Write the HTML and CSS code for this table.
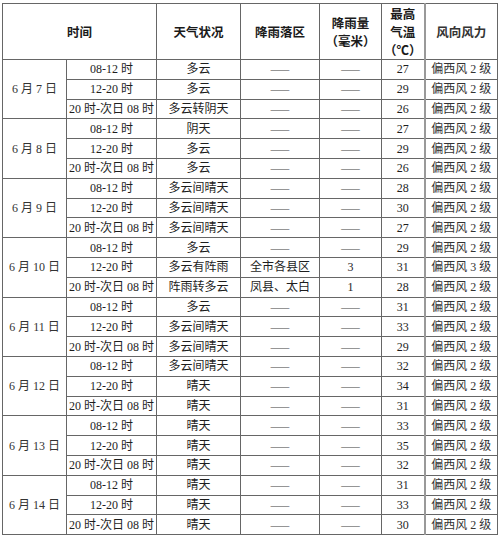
FILE: index.html
```html
<!DOCTYPE html>
<html lang="zh-CN">
<head>
<meta charset="utf-8">
<title>天气预报</title>
<link rel="stylesheet" href="styles.css">
</head>
<body>
<table class="wx">
  <colgroup>
    <col class="c-date"><col class="c-time"><col class="c-wx"><col class="c-area"><col class="c-rain"><col class="c-temp"><col class="c-wind">
  </colgroup>
  <thead>
    <tr class="head">
      <th colspan="2">时间</th>
      <th>天气状况</th>
      <th>降雨落区</th>
      <th><span class="ln">降雨量</span><span class="ln">（毫米）</span></th>
      <th><span class="ln">最高</span><span class="ln">气温</span><span class="ln">（℃）</span></th>
      <th class="wind">风向风力</th>
    </tr>
  </thead>
  <tbody>
    <tr><td rowspan="3" class="date">6 月 7 日</td><td>08-12 时</td><td>多云</td><td class="dash">——</td><td class="dash">——</td><td>27</td><td class="wind">偏西风 2 级</td></tr>
    <tr><td>12-20 时</td><td>多云</td><td class="dash">——</td><td class="dash">——</td><td>29</td><td class="wind">偏西风 2 级</td></tr>
    <tr><td>20 时-次日 08 时</td><td>多云转阴天</td><td class="dash">——</td><td class="dash">——</td><td>26</td><td class="wind">偏西风 2 级</td></tr>

    <tr><td rowspan="3" class="date">6 月 8 日</td><td>08-12 时</td><td>阴天</td><td class="dash">——</td><td class="dash">——</td><td>27</td><td class="wind">偏西风 2 级</td></tr>
    <tr><td>12-20 时</td><td>多云</td><td class="dash">——</td><td class="dash">——</td><td>29</td><td class="wind">偏西风 2 级</td></tr>
    <tr><td>20 时-次日 08 时</td><td>多云</td><td class="dash">——</td><td class="dash">——</td><td>26</td><td class="wind">偏西风 2 级</td></tr>

    <tr><td rowspan="3" class="date">6 月 9 日</td><td>08-12 时</td><td>多云间晴天</td><td class="dash">——</td><td class="dash">——</td><td>28</td><td class="wind">偏西风 2 级</td></tr>
    <tr><td>12-20 时</td><td>多云间晴天</td><td class="dash">——</td><td class="dash">——</td><td>30</td><td class="wind">偏西风 2 级</td></tr>
    <tr><td>20 时-次日 08 时</td><td>多云间晴天</td><td class="dash">——</td><td class="dash">——</td><td>27</td><td class="wind">偏西风 2 级</td></tr>

    <tr><td rowspan="3" class="date">6 月 10 日</td><td>08-12 时</td><td>多云</td><td class="dash">——</td><td class="dash">——</td><td>29</td><td class="wind">偏西风 2 级</td></tr>
    <tr><td>12-20 时</td><td>多云有阵雨</td><td>全市各县区</td><td>3</td><td>31</td><td class="wind">偏西风 3 级</td></tr>
    <tr><td>20 时-次日 08 时</td><td>阵雨转多云</td><td>凤县、太白</td><td>1</td><td>28</td><td class="wind">偏西风 2 级</td></tr>

    <tr><td rowspan="3" class="date">6 月 11 日</td><td>08-12 时</td><td>多云</td><td class="dash">——</td><td class="dash">——</td><td>31</td><td class="wind">偏西风 2 级</td></tr>
    <tr><td>12-20 时</td><td>多云间晴天</td><td class="dash">——</td><td class="dash">——</td><td>33</td><td class="wind">偏西风 2 级</td></tr>
    <tr><td>20 时-次日 08 时</td><td>多云间晴天</td><td class="dash">——</td><td class="dash">——</td><td>29</td><td class="wind">偏西风 2 级</td></tr>

    <tr><td rowspan="3" class="date">6 月 12 日</td><td>08-12 时</td><td>多云间晴天</td><td class="dash">——</td><td class="dash">——</td><td>32</td><td class="wind">偏西风 2 级</td></tr>
    <tr><td>12-20 时</td><td>晴天</td><td class="dash">——</td><td class="dash">——</td><td>34</td><td class="wind">偏西风 2 级</td></tr>
    <tr><td>20 时-次日 08 时</td><td>晴天</td><td class="dash">——</td><td class="dash">——</td><td>31</td><td class="wind">偏西风 2 级</td></tr>

    <tr><td rowspan="3" class="date">6 月 13 日</td><td>08-12 时</td><td>晴天</td><td class="dash">——</td><td class="dash">——</td><td>33</td><td class="wind">偏西风 2 级</td></tr>
    <tr><td>12-20 时</td><td>晴天</td><td class="dash">——</td><td class="dash">——</td><td>35</td><td class="wind">偏西风 2 级</td></tr>
    <tr><td>20 时-次日 08 时</td><td>晴天</td><td class="dash">——</td><td class="dash">——</td><td>32</td><td class="wind">偏西风 2 级</td></tr>

    <tr><td rowspan="3" class="date">6 月 14 日</td><td>08-12 时</td><td>晴天</td><td class="dash">——</td><td class="dash">——</td><td>31</td><td class="wind">偏西风 2 级</td></tr>
    <tr><td>12-20 时</td><td>晴天</td><td class="dash">——</td><td class="dash">——</td><td>33</td><td class="wind">偏西风 2 级</td></tr>
    <tr><td>20 时-次日 08 时</td><td>晴天</td><td class="dash">——</td><td class="dash">——</td><td>30</td><td class="wind">偏西风 2 级</td></tr>
  </tbody>
</table>
</body>
</html>
```

FILE: styles.css
```css
html, body {
  margin: 0;
  padding: 0;
  background: #ffffff;
}

body {
  padding: 3px 0 0 2px;
  font-family: "Liberation Serif", "Noto Sans CJK SC", serif;
  color: #1e1e1e;
}

.wx {
  border-collapse: collapse;
  table-layout: fixed;
  width: 495px;
  border: 1px solid #666666;
}

.c-date { width: 64px; }
.c-time { width: 90px; }
.c-wx   { width: 84px; }
.c-area { width: 79px; }
.c-rain { width: 62px; }
.c-temp { width: 43px; }
.c-wind { width: 73px; }

.wx th,
.wx td {
  border: 1px solid #666666;
  padding: 0;
  text-align: center;
  vertical-align: middle;
  white-space: nowrap;
  overflow: hidden;
}

.wx th {
  font-family: "Noto Sans CJK SC", sans-serif;
  font-weight: 700;
  font-size: 12.5px;
  line-height: 18px;
  color: #1a1a1a;
}

.ln {
  display: block;
}

.head { height: 56px; }

.wx td {
  font-size: 12px;
  line-height: 14px;
  height: 18.8px;
}

.wx tbody tr { height: 19.8px; }

.wx .wind {
  border-left: 2px solid #999999;
  color: #333333;
}

.wx .date {
  color: #333333;
}

.dash {
  font-family: "Noto Sans CJK SC", sans-serif;
  font-size: 10px;
  color: #444444;
  font-weight: 300;
}
```
